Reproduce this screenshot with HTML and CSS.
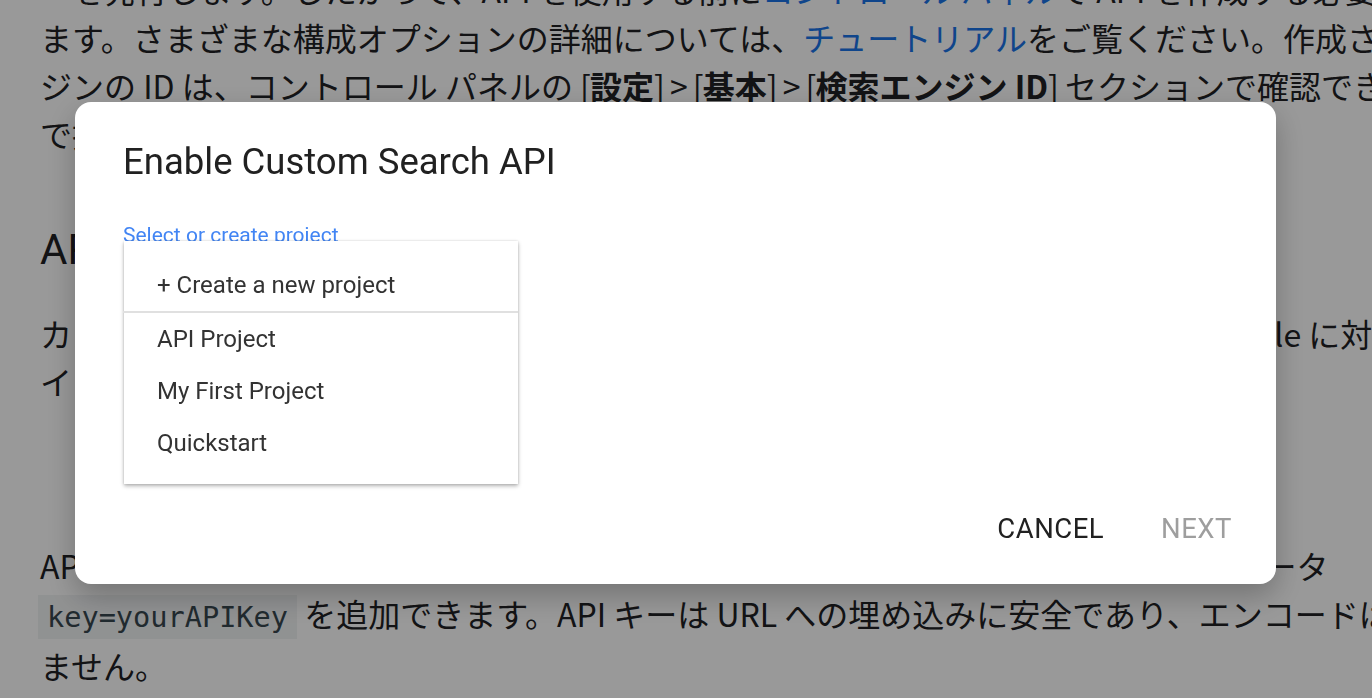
FILE: index.html
```html
<!DOCTYPE html>
<html lang="ja">
<head>
<meta charset="utf-8">
<title>Custom Search JSON API</title>
<link rel="stylesheet" href="styles.css">
</head>
<body>
<main class="doc">
  <p class="para p1">
    <span class="line">ーを発行します。したがって、API を使用する前に<a class="link">コントロール パネル</a>で API を作成する必要があり</span>
    <span class="line">ます。さまざまな構成オプションの詳細については、<a class="link">チュートリアル</a>をご覧ください。作成された検索エン</span>
    <span class="line">ジンの ID は、コントロール パネルの <span class="tight">[</span><b>設定</b><span class="tight">] &gt; [</span><b>基本</b><span class="tight">] &gt; [</span><b>検索エンジン ID</b><span class="tight">]</span> セクションで確認できま</span>
    <span class="line">で指定します。</span>
  </p>
  <h2 class="heading">API キー</h2>
  <p class="para p2">
    <span class="line">カスタム検索 JSON API では、&ensp;&#8198;API キーを使用する必要があります。API キーは Google に対して</span>
    <span class="line">イアントのプロジェクトを識別するために使用されます。</span>
  </p>
  <p class="para p3">
    <span class="line">API キーを使用してリクエストを認証するには、各リクエストの URL にクエリ パラメータ</span>
    <span class="line"><code class="code">key=yourAPIKey</code> を追加できます。API キーは URL への埋め込みに安全であり、エンコードは必要あり</span>
    <span class="line">ません。</span>
  </p>
</main>

<div class="scrim"></div>

<section class="dialog">
  <h1 class="dialog-title">Enable Custom Search API</h1>
  <div class="field">
    <span class="field-label">Select or create project</span>
    <ul class="menu">
      <li class="menu-item create">+ Create a new project</li>
      <li class="menu-item">API Project</li>
      <li class="menu-item">My First Project</li>
      <li class="menu-item">Quickstart</li>
    </ul>
  </div>
  <div class="actions">
    <button class="btn">CANCEL</button>
    <button class="btn disabled">NEXT</button>
  </div>
</section>
</body>
</html>
```

FILE: styles.css
```css
html, body {
  margin: 0;
  padding: 0;
  height: 100%;
  overflow: hidden;
  background: #ffffff;
}

.doc {
  padding: 0 0 0 40px;
  margin-top: -35px;
  font-family: "Noto Sans CJK JP", "Noto Sans", sans-serif;
  font-size: 32px;
  line-height: 48px;
  color: #202124;
  white-space: nowrap;
}

.para {
  margin: 0;
}

.line {
  display: block;
}

.tight {
  letter-spacing: -1px;
}

.link {
  color: #1a73e8;
  text-decoration: none;
}

.para b {
  font-weight: 700;
}

.heading {
  margin: 65px 0 31px;
  font-family: Roboto, "Noto Sans CJK JP", sans-serif;
  font-weight: 400;
  font-size: 42px;
  line-height: 56px;
}

.p3 {
  margin-top: 136px;
}

.code {
  font-family: "DejaVu Sans Mono", monospace;
  font-size: 28.6px;
  background: #f1f3f4;
  color: #37474f;
  padding: 5px 9px;
  margin-left: -2px;
}

.scrim {
  position: fixed;
  inset: 0;
  background: rgba(0, 0, 0, 0.4);
}

.dialog {
  position: fixed;
  left: 75px;
  top: 102px;
  width: 1201px;
  height: 482px;
  box-sizing: border-box;
  background: #ffffff;
  border-radius: 16px;
  box-shadow: 0 12px 30px rgba(0, 0, 0, 0.25);
  padding: 38px 44px 37px 48px;
  display: flex;
  flex-direction: column;
  font-family: Roboto, "Noto Sans", sans-serif;
}

.dialog-title {
  margin: 0;
  font-size: 36.5px;
  font-weight: 400;
  line-height: 44px;
  color: #212121;
}

.field {
  position: relative;
  margin-top: 39px;
  flex: 1;
}

.field-label {
  display: block;
  font-size: 21px;
  line-height: 24px;
  color: #4285f4;
}

.menu {
  position: absolute;
  left: 1px;
  top: 18px;
  width: 394px;
  margin: 0;
  padding: 18px 0 15px;
  list-style: none;
  background: #ffffff;
  box-shadow: 0 2px 4px rgba(0, 0, 0, 0.3), 0 0 2px rgba(0, 0, 0, 0.12);
}

.menu-item {
  height: 52px;
  line-height: 52px;
  padding-left: 33px;
  font-size: 24px;
  color: #333333;
}

.menu-item.create {
  border-bottom: 2px solid #e0e0e0;
  margin-left: -1px;
  padding-left: 34px;
}

.actions {
  display: flex;
  justify-content: flex-end;
  gap: 57px;
}

.btn {
  border: 0;
  background: none;
  padding: 0;
  font-family: Roboto, sans-serif;
  font-size: 27.5px;
  line-height: 36px;
  letter-spacing: 0.5px;
  color: #212121;
}

.btn.disabled {
  color: #9e9e9e;
}
```
